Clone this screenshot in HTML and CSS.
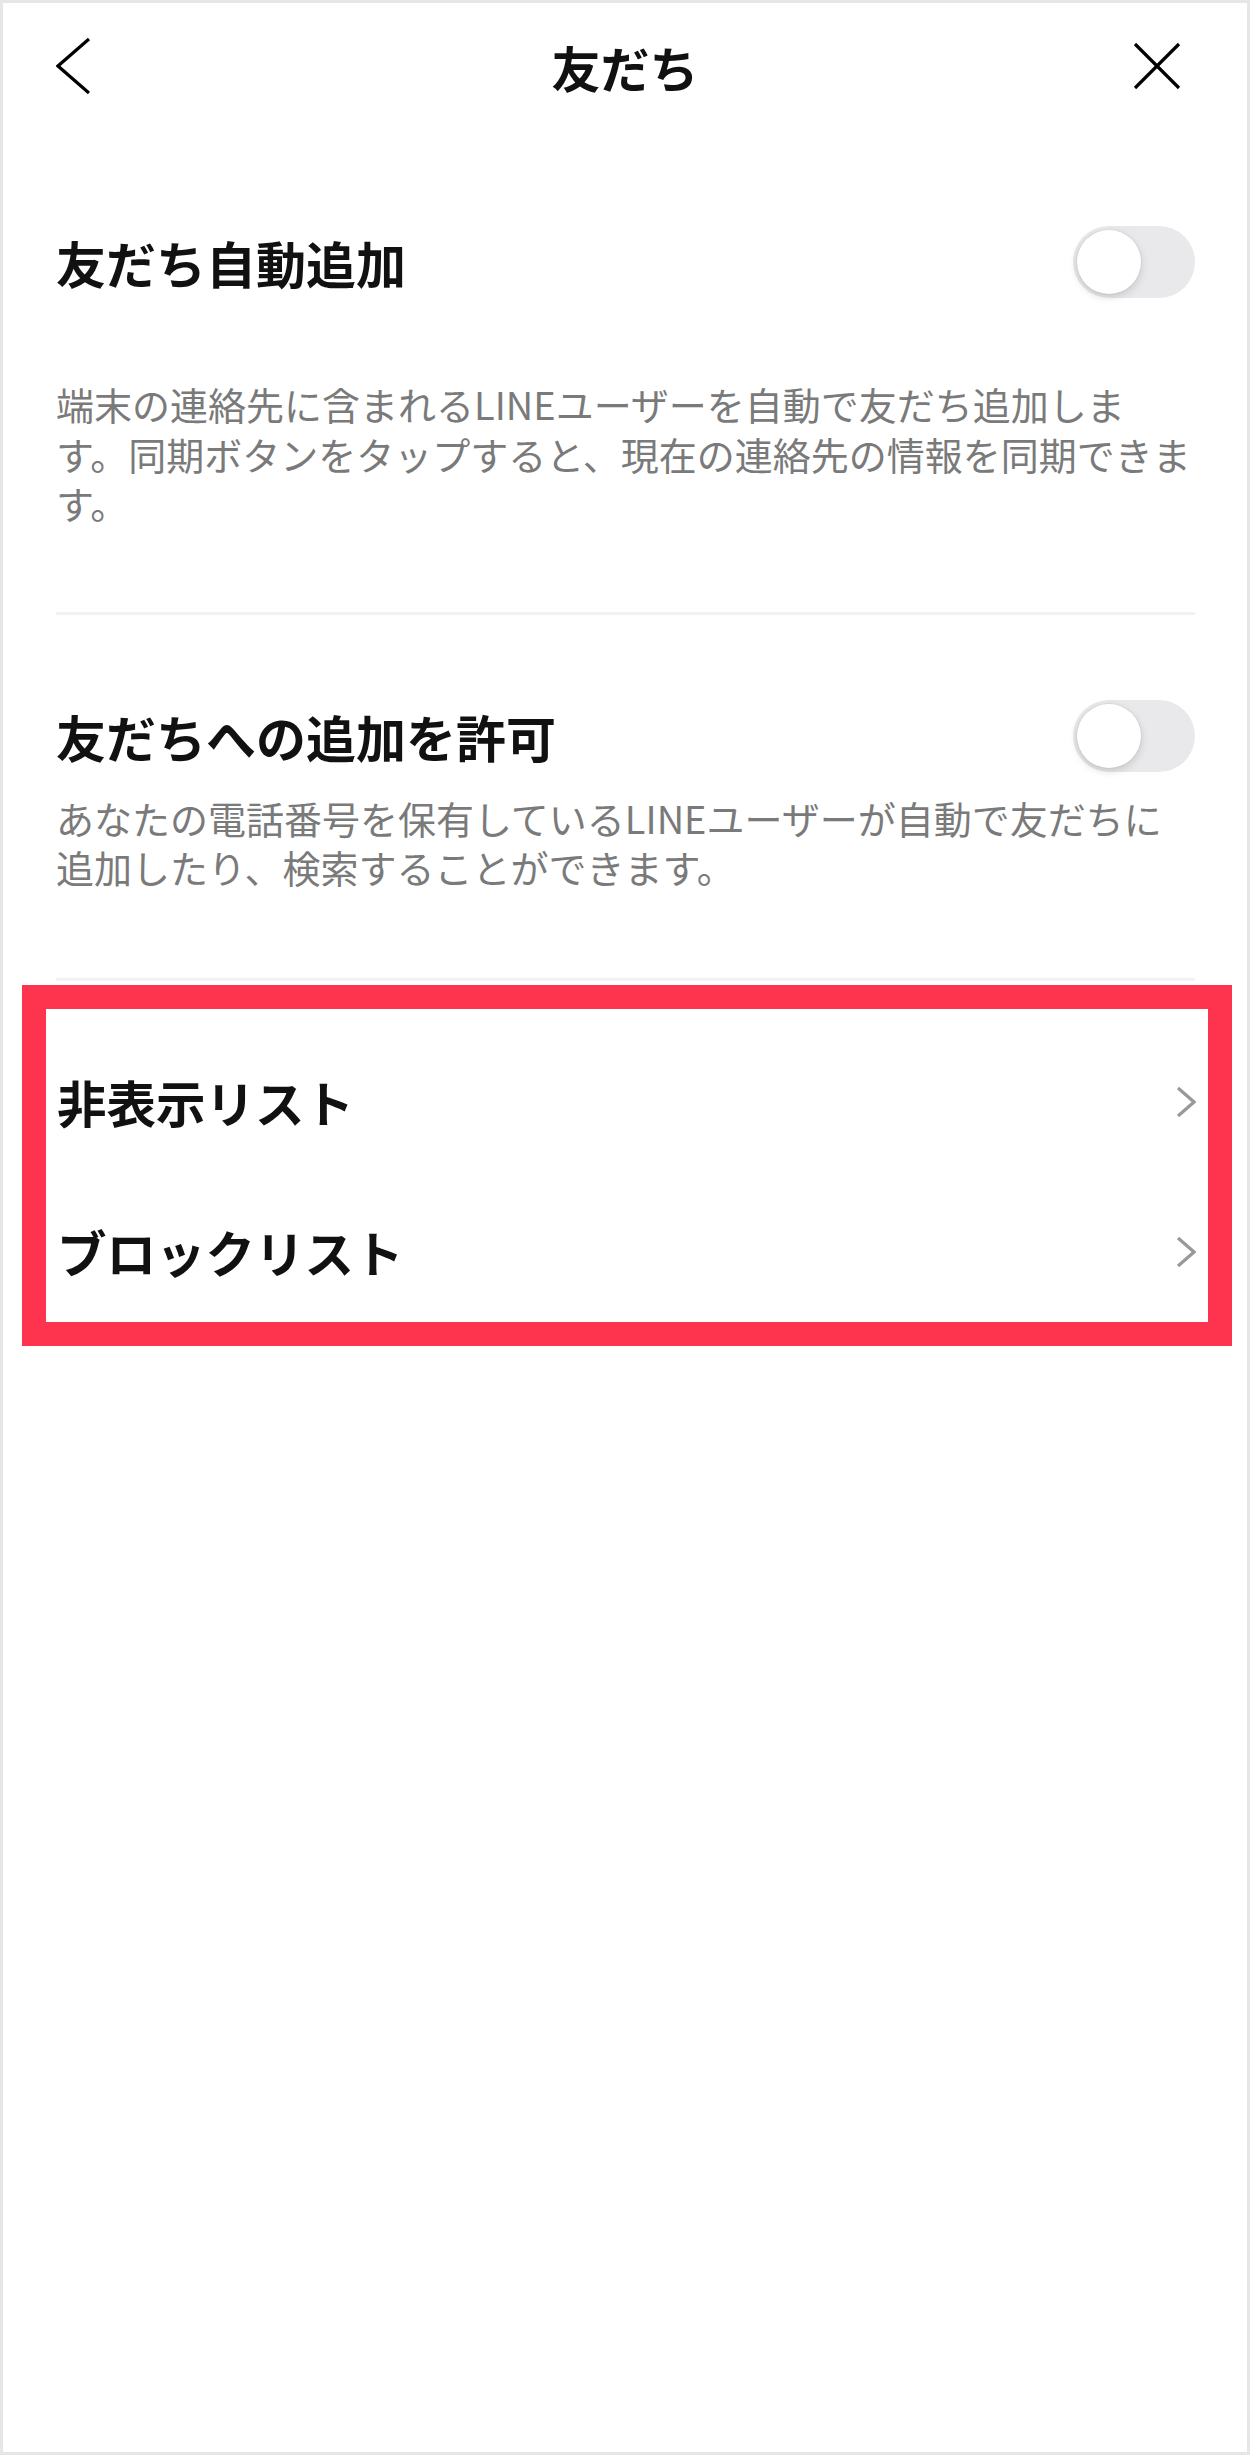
FILE: index.html
```html
<!DOCTYPE html>
<html lang="ja">
<head>
  <meta charset="UTF-8">
  <meta name="viewport" content="width=device-width, initial-scale=1.0">
  <title>友だち</title>
  <link rel="stylesheet" href="styles.css">
</head>
<body>
  <div class="screen">
    <header class="topbar">
      <div class="topbar-left">
        <svg class="icon-back" width="34" height="58" viewBox="0 0 34 58">
          <polyline points="33,2 2,29 33,56" fill="none" stroke="#000" stroke-width="3.2"/>
        </svg>
      </div>
      <h1>友だち</h1>
      <div class="topbar-right">
        <svg class="icon-close" width="48" height="48" viewBox="0 0 48 48">
          <line x1="2" y1="2" x2="46" y2="46" stroke="#000" stroke-width="3.2"/>
          <line x1="46" y1="2" x2="2" y2="46" stroke="#000" stroke-width="3.2"/>
        </svg>
      </div>
    </header>

    <section class="setting first">
      <div class="setting-row">
        <h2>友だち自動追加</h2>
        <div class="toggle"><span class="knob"></span></div>
      </div>
      <p class="desc desc-far">端末の連絡先に含まれるLINEユーザーを自動で友だち追加しま<br>す。同期ボタンをタップすると、現在の連絡先の情報を同期できま<br>す。</p>
    </section>

    <hr class="divider">

    <section class="setting second">
      <div class="setting-row">
        <h2>友だちへの追加を許可</h2>
        <div class="toggle"><span class="knob"></span></div>
      </div>
      <p class="desc desc-near">あなたの電話番号を保有しているLINEユーザーが自動で友だちに<br>追加したり、検索することができます。</p>
    </section>

    <hr class="divider divider-last">

    <div class="link-list">
      <a class="link-row" href="#hidden">
        <span>非表示リスト</span>
        <svg width="20" height="32" viewBox="0 0 20 32">
          <polyline points="2,2 18,16 2,30" fill="none" stroke="#999" stroke-width="3.2"/>
        </svg>
      </a>
      <a class="link-row" href="#blocked">
        <span>ブロックリスト</span>
        <svg width="20" height="32" viewBox="0 0 20 32">
          <polyline points="2,2 18,16 2,30" fill="none" stroke="#999" stroke-width="3.2"/>
        </svg>
      </a>
    </div>
  </div>
</body>
</html>
```

FILE: styles.css
```css
body {
  margin: 0;
  background: #fff;
  font-family: "Noto Sans CJK JP", "Noto Sans", sans-serif;
  color: #111;
}
.screen {
  width: 1250px;
  height: 2455px;
  box-sizing: border-box;
  border: 3px solid #e6e6e6;
  background: #fff;
}
.topbar {
  height: 126px;
  display: grid;
  grid-template-columns: 1fr auto 1fr;
  align-items: center;
}
.topbar-left {
  padding-left: 53px;
  display: flex;
}
.topbar-right {
  padding-right: 66px;
  display: flex;
  justify-content: flex-end;
}
.topbar h1 {
  margin: 0;
  font-size: 49px;
  font-weight: 700;
  line-height: 1;
}
.setting {
  padding: 0 52px 0 53px;
}
.setting.first {
  margin-top: 97px;
}
.setting.second {
  margin-top: 85px;
}
.setting-row {
  display: flex;
  justify-content: space-between;
  align-items: center;
  height: 72px;
}
.setting h2 {
  margin: 0;
  font-size: 50px;
  font-weight: 700;
  line-height: 1;
}
.toggle {
  width: 122px;
  height: 72px;
  border-radius: 36px;
  background: #e9e9eb;
  box-sizing: border-box;
  padding: 4px;
}
.knob {
  display: block;
  width: 64px;
  height: 64px;
  border-radius: 50%;
  background: #fff;
  box-shadow: 0 3px 8px rgba(0,0,0,0.15), 0 0 0 1px rgba(0,0,0,0.04);
}
.desc {
  margin: 0;
  font-size: 38px;
  line-height: 49.5px;
  color: #7a7a7a;
  white-space: nowrap;
}
.desc-far {
  margin-top: 81px;
}
.desc-near {
  margin-top: 21px;
}
.divider {
  margin: 84px 52px 0 53px;
  border: none;
  height: 3px;
  background: #f2f2f2;
}
.divider-last {
  margin-top: 86px;
}
.link-list {
  margin: 4px 15px 0 19px;
  border: 24px solid #fe344f;
  padding: 23px 12px 0 11px;
  height: 361px;
  box-sizing: border-box;
  display: flex;
  flex-direction: column;
  gap: 10px;
}
.link-row {
  height: 140px;
  display: flex;
  justify-content: space-between;
  align-items: center;
  text-decoration: none;
  color: #111;
  font-size: 49.5px;
  font-weight: 700;
}
```
